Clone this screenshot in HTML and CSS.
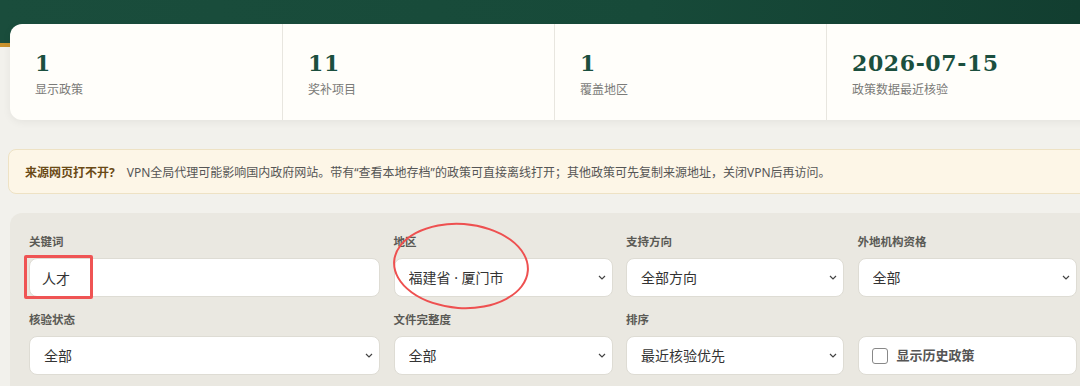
FILE: index.html
```html
<!DOCTYPE html>
<html lang="zh-CN">
<head>
  <meta charset="UTF-8">
  <title>政策查询</title>
  <meta name="viewport" content="width=device-width, initial-scale=1.0">
  <link rel="stylesheet" href="styles.css">
</head>
<body>
<header class="hero"></header>

<main class="page">
  <section class="stats">
    <div class="stat">
      <div class="stat-num">1</div>
      <div class="stat-label">显示政策</div>
    </div>
    <div class="stat">
      <div class="stat-num">11</div>
      <div class="stat-label">奖补项目</div>
    </div>
    <div class="stat">
      <div class="stat-num">1</div>
      <div class="stat-label">覆盖地区</div>
    </div>
    <div class="stat">
      <div class="stat-num">2026-07-15</div>
      <div class="stat-label">政策数据最近核验</div>
    </div>
  </section>

  <div class="notice">
    <strong>来源网页打不开?</strong>
    <span>VPN全局代理可能影响国内政府网站。带有“查看本地存档”的政策可直接离线打开；其他政策可先复制来源地址，关闭VPN后再访问。</span>
  </div>

  <form class="filters">
    <div class="field">
      <label for="kw">关键词</label>
      <div class="control-wrap">
        <input id="kw" type="text" value="人才">
        <span class="mark-box"></span>
      </div>
    </div>
    <div class="field">
      <label for="region">地区</label>
      <div class="control-wrap">
        <select id="region"><option>福建省 · 厦门市</option></select>
        <span class="mark-ring"></span>
      </div>
    </div>
    <div class="field">
      <label for="dir">支持方向</label>
      <select id="dir"><option>全部方向</option></select>
    </div>
    <div class="field">
      <label for="qual">外地机构资格</label>
      <select id="qual"><option>全部</option></select>
    </div>

    <div class="field">
      <label for="verify">核验状态</label>
      <select id="verify"><option>全部</option></select>
    </div>
    <div class="field">
      <label for="doc">文件完整度</label>
      <select id="doc"><option>全部</option></select>
    </div>
    <div class="field">
      <label for="sort">排序</label>
      <select id="sort"><option>最近核验优先</option></select>
    </div>
    <div class="field">
      <span class="spacer">&nbsp;</span>
      <label class="check"><input type="checkbox"> 显示历史政策</label>
    </div>
  </form>
</main>
</body>
</html>
```

FILE: styles.css
```css
body {
  margin: 0;
  width: 1080px;
  overflow: hidden;
  background: #f2f1ec;
  font-family: "Noto Sans", "Noto Sans CJK SC", sans-serif;
  color: #333;
}
.hero {
  height: 43px;
  background: linear-gradient(90deg, #1a4d3c 0%, #174a39 60%, #123e30 100%);
  border-bottom: 4px solid #c9922e;
}
.page {
  width: 1088px;
  margin: -23px 0 0 10px;
}

/* Stats */
.stats {
  display: grid;
  grid-template-columns: repeat(4, 272px);
  height: 96px;
  background: #fffefa;
  border-radius: 12px 0 0 12px;
  box-shadow: 0 2px 8px rgba(0,0,0,0.06);
  position: relative;
}
.stat {
  padding: 26px 0 0 25px;
  border-left: 1px solid #e8e6df;
}
.stat:first-child {
  border-left: none;
}
.stat-num {
  font-family: "DejaVu Serif", "Liberation Serif", serif;
  font-weight: bold;
  font-size: 22px;
  line-height: 26px;
  color: #1b4f3e;
  letter-spacing: 0.6px;
}
.stat-label {
  margin-top: 6px;
  font-size: 12px;
  line-height: 16px;
  color: #7b7b78;
}

/* Notice */
.notice {
  margin: 29px 0 0 -2px;
  height: 43px;
  display: flex;
  align-items: center;
  gap: 12px;
  padding-left: 16px;
  background: #fdf6e7;
  border: 1px solid #eee2c4;
  border-radius: 8px;
  font-size: 12px;
  color: #555;
}
.notice strong {
  color: #6a4a16;
}

/* Filters */
.filters {
  margin-top: 19px;
  padding: 20px 19px;
  background: #eae8e1;
  border-radius: 12px 0 0 0;
  display: grid;
  grid-template-columns: 351px 219px 218px 219px;
  column-gap: 13.5px;
  row-gap: 14px;
}
.field {
  display: flex;
  flex-direction: column;
}
.field > label,
.spacer {
  font-size: 11.5px;
  font-weight: bold;
  line-height: 18px;
  color: #5a5a55;
  margin-bottom: 7px;
}
.control-wrap {
  position: relative;
}
input[type="text"], select {
  box-sizing: border-box;
  width: 100%;
  height: 39px;
  padding: 0 14px;
  border: 1px solid #dedcd4;
  border-radius: 8px;
  background: #fff;
  font-family: "Noto Sans", "Noto Sans CJK SC", sans-serif;
  font-size: 14px;
  color: #333;
  outline: none;
}
input[type="text"] {
  padding-left: 12px;
}
select {
  appearance: none;
  -webkit-appearance: none;
  background-image: url("data:image/svg+xml,%3Csvg xmlns='http://www.w3.org/2000/svg' width='8' height='5' viewBox='0 0 8 5'%3E%3Cpath d='M1 1l3 3 3-3' fill='none' stroke='%23444' stroke-width='1.2'/%3E%3C/svg%3E");
  background-repeat: no-repeat;
  background-position: right 6px center;
}
.field > .check {
  box-sizing: border-box;
  height: 39px;
  margin: 0;
  display: flex;
  align-items: center;
  gap: 9px;
  padding-left: 13px;
  background: #fff;
  border: 1px solid #dedcd4;
  border-radius: 8px;
  font-size: 13px;
  line-height: 39px;
  font-weight: bold;
  color: #555;
}
.check input {
  margin: 0;
  width: 16px;
  height: 16px;
  appearance: none;
  -webkit-appearance: none;
  border: 1.5px solid #888;
  border-radius: 3px;
  background: #fff;
}

/* Annotation marks drawn over the controls */
.mark-box {
  position: absolute;
  left: -5px;
  top: -3px;
  width: 63px;
  height: 38px;
  border: 3px solid #ef5454;
  border-radius: 2px;
  pointer-events: none;
}
.mark-ring {
  position: absolute;
  left: -1px;
  top: -35px;
  width: 132px;
  height: 82px;
  border: 2px solid #ee5050;
  border-radius: 50%;
  transform: rotate(4deg);
  pointer-events: none;
}
```
